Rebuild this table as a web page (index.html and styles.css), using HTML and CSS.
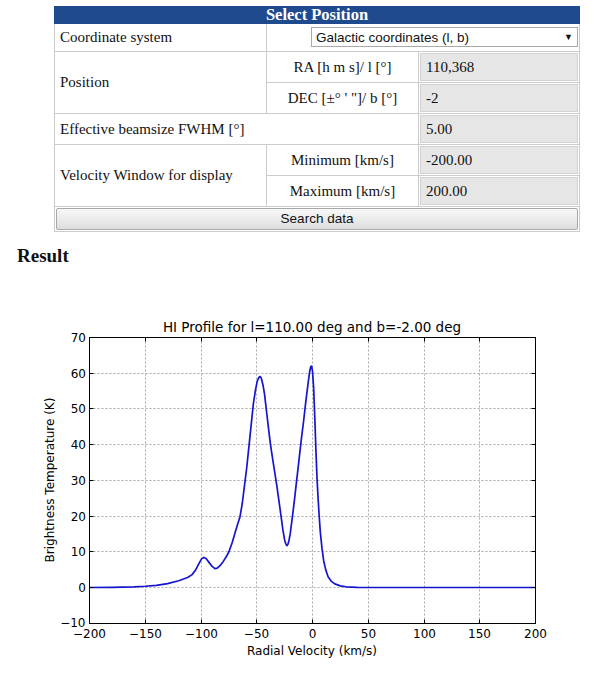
FILE: index.html
```html
<!DOCTYPE html>
<html>
<head>
<meta charset="utf-8">
<title>Select Position</title>
<link rel="stylesheet" href="styles.css">
</head>
<body>
<div class="page">
  <table class="form">
    <colgroup><col class="c1"><col class="c2"><col class="c3"></colgroup>
    <tr><th colspan="3" class="title">Select Position</th></tr>
    <tr>
      <td class="lab">Coordinate system</td>
      <td colspan="2" class="sel-cell"><div class="select"><span>Galactic coordinates (l, b)</span><span class="arrow">&#9660;</span></div></td>
    </tr>
    <tr>
      <td rowspan="2" class="lab">Position</td>
      <td class="sub">RA [h m s]/ l [°]</td>
      <td class="inp"><div class="field">110,368</div></td>
    </tr>
    <tr>
      <td class="sub">DEC [±° ' "]/ b [°]</td>
      <td class="inp"><div class="field">-2</div></td>
    </tr>
    <tr>
      <td colspan="2" class="lab">Effective beamsize FWHM [°]</td>
      <td class="inp"><div class="field">5.00</div></td>
    </tr>
    <tr>
      <td rowspan="2" class="lab">Velocity Window for display</td>
      <td class="sub">Minimum [km/s]</td>
      <td class="inp"><div class="field">-200.00</div></td>
    </tr>
    <tr>
      <td class="sub">Maximum [km/s]</td>
      <td class="inp"><div class="field">200.00</div></td>
    </tr>
    <tr><td colspan="3" class="btn-cell"><div class="button">Search data</div></td></tr>
  </table>

  <h2 class="result">Result</h2>

  <svg class="plot" width="600" height="404" viewBox="0 267 600 404" xmlns="http://www.w3.org/2000/svg">
    <text class="ptitle" x="312" y="331.5" text-anchor="middle">HI Profile for l=110.00 deg and b=-2.00 deg</text>
    <g class="grid">
      <line x1="145.5" y1="337.5" x2="145.5" y2="623.5"/>
      <line x1="201.5" y1="337.5" x2="201.5" y2="623.5"/>
      <line x1="256.5" y1="337.5" x2="256.5" y2="623.5"/>
      <line x1="312.5" y1="337.5" x2="312.5" y2="623.5"/>
      <line x1="368.5" y1="337.5" x2="368.5" y2="623.5"/>
      <line x1="424.5" y1="337.5" x2="424.5" y2="623.5"/>
      <line x1="479.5" y1="337.5" x2="479.5" y2="623.5"/>
      <line x1="89.5" y1="373.5" x2="535.5" y2="373.5"/>
      <line x1="89.5" y1="408.5" x2="535.5" y2="408.5"/>
      <line x1="89.5" y1="444.5" x2="535.5" y2="444.5"/>
      <line x1="89.5" y1="480.5" x2="535.5" y2="480.5"/>
      <line x1="89.5" y1="516.5" x2="535.5" y2="516.5"/>
      <line x1="89.5" y1="551.5" x2="535.5" y2="551.5"/>
      <line x1="89.5" y1="587.5" x2="535.5" y2="587.5"/>
    </g>
    <g transform="translate(312.5 587.5) scale(1.115 -3.575)">
      <polyline class="curve" points="-200,0 -180,0.05 -160,0.2 -150,0.35 -140,0.6 -130,1.1 -120,1.9 -112,2.8 -108,3.6 -105,4.8 -102,6.6 -99.5,8.0 -97.5,8.4 -95.5,8.1 -93,7.1 -90,5.9 -87.5,5.3 -85.5,5.4 -83,6.1 -80,7.3 -77,8.8 -75,10 -72,12.6 -69,15.8 -67,17.8 -65,19.8 -63,23.5 -61,28.5 -59,33.5 -57,39.5 -55,45.5 -53,51.5 -51,55.5 -49.5,57.8 -48,58.8 -47,59 -46,58.6 -44.5,56.8 -43,54 -41.5,50 -40,46 -38.5,42 -37,38.5 -35.5,35.5 -34,32.5 -32,28.5 -30,24 -28,19.5 -26.5,16 -25,13.3 -24,12.2 -23,11.7 -22,12.1 -21,13.3 -20,15 -18,19.8 -16,25 -14,30.5 -12,36 -10,41.5 -8,46.5 -6,52 -4,57 -2.5,60.5 -1.5,61.8 -0.8,61.9 0,60.5 1,56 2,48 3,39 4,31 5,25 6,20 7,15.5 8.5,11 10,7.5 12,4.8 14,3 17,1.7 20,1 25,0.45 30,0.2 40,0.05 50,0 200,0"/>
    </g>
    <rect class="frame" x="89.5" y="337.5" width="446" height="286"/>
    <g class="ticks">
      <path d="M89.5 623.5v-4M145.5 623.5v-4M201.5 623.5v-4M256.5 623.5v-4M312.5 623.5v-4M368.5 623.5v-4M424.5 623.5v-4M479.5 623.5v-4M535.5 623.5v-4"/>
      <path d="M89.5 337.5v4M145.5 337.5v4M201.5 337.5v4M256.5 337.5v4M312.5 337.5v4M368.5 337.5v4M424.5 337.5v4M479.5 337.5v4M535.5 337.5v4"/>
      <path d="M89.5 337.5h4M89.5 373.5h4M89.5 408.5h4M89.5 444.5h4M89.5 480.5h4M89.5 516.5h4M89.5 551.5h4M89.5 587.5h4M89.5 623.5h4"/>
      <path d="M535.5 337.5h-4M535.5 373.5h-4M535.5 408.5h-4M535.5 444.5h-4M535.5 480.5h-4M535.5 516.5h-4M535.5 551.5h-4M535.5 587.5h-4M535.5 623.5h-4"/>
    </g>
    <g class="ylab" text-anchor="end">
      <text x="86" y="341.5">70</text>
      <text x="86" y="377.5">60</text>
      <text x="86" y="412.5">50</text>
      <text x="86" y="448.5">40</text>
      <text x="86" y="484.5">30</text>
      <text x="86" y="520.5">20</text>
      <text x="86" y="555.5">10</text>
      <text x="86" y="591.5">0</text>
      <text x="85.5" y="627">−10</text>
    </g>
    <g class="xlab" text-anchor="middle">
      <text x="89.5" y="637.5">−200</text>
      <text x="145.5" y="637.5">−150</text>
      <text x="201.5" y="637.5">−100</text>
      <text x="256.5" y="637.5">−50</text>
      <text x="312.5" y="637.5">0</text>
      <text x="368.5" y="637.5">50</text>
      <text x="424.5" y="637.5">100</text>
      <text x="479.5" y="637.5">150</text>
      <text x="535.5" y="637.5">200</text>
    </g>
    <text class="axlabel" x="312" y="655" text-anchor="middle">Radial Velocity (km/s)</text>
    <text class="axlabel" x="0" y="0" text-anchor="middle" transform="translate(53.5 480) rotate(-90)">Brightness Temperature (K)</text>
  </svg>
</div>
</body>
</html>
```

FILE: styles.css
```css
body {
  margin: 0;
  background: #ffffff;
  color: #111111;
  font-family: "Liberation Serif", "Times New Roman", serif;
}

.page {
  padding-top: 6px;
}

.form {
  margin-left: 54px;
  width: 525px;
  border-collapse: collapse;
  table-layout: fixed;
  font-size: 15px;
}

.c1 { width: 212px; }
.c2 { width: 152px; }
.c3 { width: 161px; }

.form td {
  border: 1px solid #cccccc;
  padding: 1px 5px;
  vertical-align: middle;
}

.form th.title {
  background: #1f4a8e;
  border: 1px solid #1f4a8e;
  color: #ffffff;
  font-size: 16.5px;
  font-weight: bold;
  height: 16px;
  line-height: 16px;
  padding: 0;
  text-align: center;
}

.form td.sub {
  text-align: center;
  padding: 1px 2px;
}

.form td.inp {
  padding: 1px;
}

.field {
  box-sizing: border-box;
  height: 28px;
  line-height: 26px;
  padding-left: 5px;
  background: #e6e6e6;
  border: 1px solid #d2d2d2;
  font-variant-numeric: oldstyle-nums;
}

.form td.sel-cell {
  text-align: right;
  padding: 3px 1px 4px 1px;
}

.select {
  display: inline-flex;
  box-sizing: border-box;
  width: 267px;
  height: 20px;
  align-items: center;
  justify-content: space-between;
  padding: 0 4px 0 4px;
  background: #ffffff;
  border: 1px solid #a9a9a9;
  font-family: "Liberation Sans", Arial, sans-serif;
  font-size: 13.5px;
  color: #111111;
  text-align: left;
}

.arrow {
  font-size: 9px;
  color: #111111;
}

.form td.btn-cell {
  padding: 1px;
}

.button {
  box-sizing: border-box;
  height: 22px;
  line-height: 20px;
  border: 1px solid #a8a8a8;
  border-radius: 2px;
  background: linear-gradient(#f8f8f8, #dedede);
  font-family: "Liberation Sans", Arial, sans-serif;
  font-size: 13.5px;
  color: #111111;
  text-align: center;
}

.result {
  margin: 13px 0 0 17px;
  font-size: 19px;
  line-height: 22px;
  font-weight: bold;
}

.plot {
  display: block;
  font-family: "DejaVu Sans", sans-serif;
}

.ptitle {
  font-size: 13.5px;
  fill: #000000;
}

.grid line {
  stroke: #a8a8a8;
  stroke-width: 1;
  stroke-dasharray: 2 2;
}

.curve {
  fill: none;
  stroke: #1515d0;
  stroke-width: 1.7;
  stroke-linejoin: round;
  vector-effect: non-scaling-stroke;
}

.frame {
  fill: none;
  stroke: #000000;
  stroke-width: 1;
}

.ticks path {
  stroke: #000000;
  stroke-width: 1;
  fill: none;
}

.ylab text,
.xlab text {
  font-size: 12px;
  fill: #000000;
}

.axlabel {
  font-size: 12px;
  fill: #000000;
}
```
